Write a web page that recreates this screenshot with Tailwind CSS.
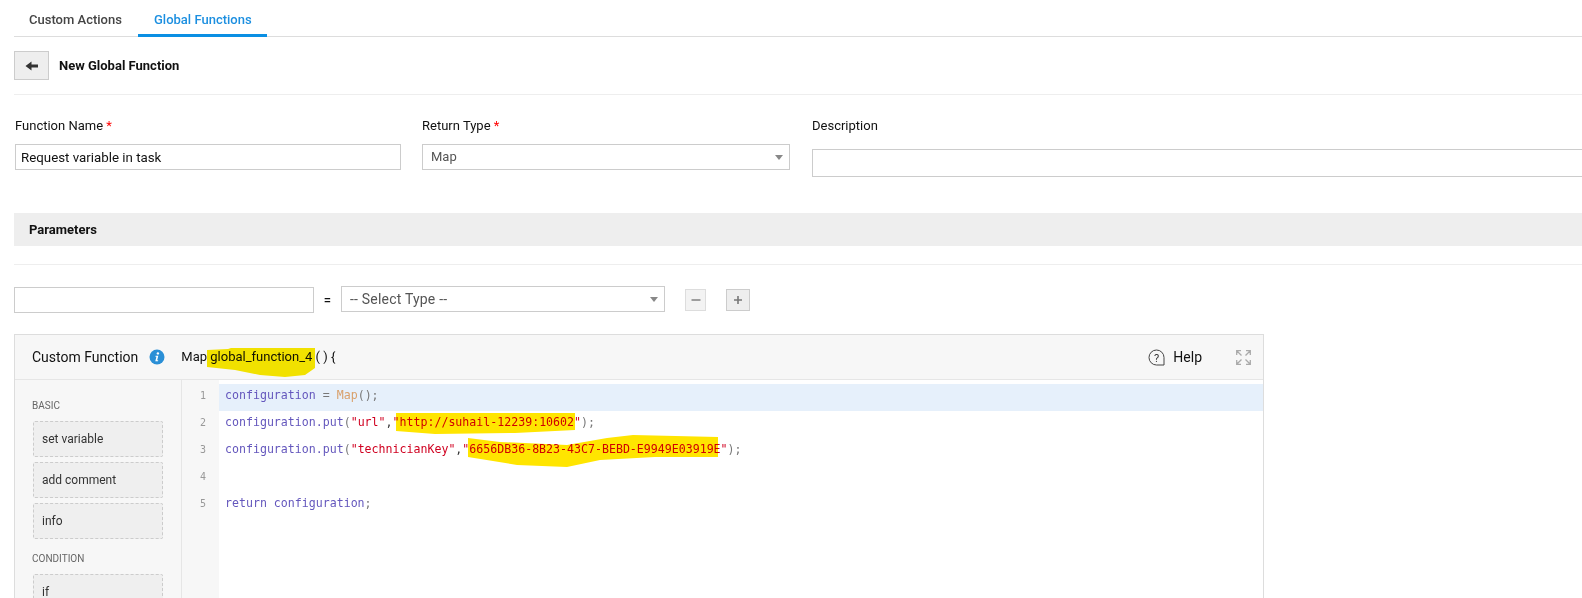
<!DOCTYPE html>
<html lang="en">
<head>
    <meta charset="UTF-8">
    <title>New Global Function</title>
    <script src="https://cdn.jsdelivr.net/npm/@tailwindcss/browser@4"></script>
</head>
<body class="bg-white h-[598px] overflow-hidden font-['Roboto',sans-serif] text-[13px] text-[#111]">
    <!-- Tabs -->
    <div class="ml-[14px] h-[37px] flex border-b border-[#ddd]">
        <div class="w-[124px] pl-[15px] pt-[10px] font-medium text-[#444]">Custom Actions</div>
        <div class="w-[129px] pl-[16px] pt-[10px] font-medium text-[#1c8fe0] border-b-[3px] border-[#0a8fe3] h-[37px]">Global Functions</div>
    </div>

    <!-- Title -->
    <div class="ml-[14px] h-[58px] flex items-center border-b border-[#eee]">
        <button class="w-[35px] h-[29px] bg-[#eee] border border-[#ccc] flex items-center justify-center">
            <svg width="14" height="12" viewBox="0 0 14 12"><path d="M0.5 6 L6.5 1.5 V4.5 H13 V7.5 H6.5 V10.5 Z" fill="#333"/></svg>
        </button>
        <span class="ml-[10px] font-bold text-[#111]">New Global Function</span>
    </div>

    <!-- Fields -->
    <div class="flex mt-[21px] h-[63px]">
        <div class="ml-[15px] w-[386px]">
            <div class="h-[28px] leading-[20px]">Function Name <span class="text-[#f00]">*</span></div>
            <input class="w-full h-[26px] border border-[#ccc] px-[5px] text-[13.3px] text-[#111] outline-none" value="Request variable in task">
        </div>
        <div class="ml-[21px] w-[368px]">
            <div class="h-[28px] leading-[20px]">Return Type <span class="text-[#f00]">*</span></div>
            <div class="h-[26px] border border-[#ccc] pl-[8px] pr-[6px] flex items-center justify-between text-[#555]">
                <span>Map</span>
                <svg width="8" height="5" viewBox="0 0 8 5"><path d="M0 0 H8 L4 5 Z" fill="#888"/></svg>
            </div>
        </div>
        <div class="ml-[22px] flex-1">
            <div class="h-[33px] leading-[20px]">Description</div>
            <div class="h-[28px] border border-r-0 border-[#ccc]"></div>
        </div>
    </div>

    <!-- Parameters -->
    <div class="ml-[14px] mt-[34px] h-[33px] bg-[#eee] pl-[15px] flex items-center font-bold text-[#111]">Parameters</div>
    <div class="ml-[14px] mt-[18px] border-t border-[#eee]"></div>

    <div class="ml-[14px] mt-[20px] h-[27px] flex items-center">
        <input class="w-[300px] h-[26px] mt-[2px] border border-[#ccc] outline-none">
        <span class="w-[27px] mt-[3px] text-center font-medium">=</span>
        <div class="w-[324px] h-[26px] border border-[#ccc] pl-[8px] pr-[6px] pt-px flex items-center justify-between text-[14px] tracking-[0.2px] text-[#555] [font-variant-ligatures:none]">
            <span>-- Select Type --</span>
            <svg width="8" height="5" viewBox="0 0 8 5"><path d="M0 0 H8 L4 5 Z" fill="#888"/></svg>
        </div>
        <button class="ml-[20px] w-[21px] h-[22px] mt-[3px] bg-[#f3f3f3] border border-[#ddd] flex items-center justify-center">
            <svg width="10" height="10" viewBox="0 0 10 10"><path d="M0.5 4.2 H9.5 V5.8 H0.5 Z" fill="#888"/></svg>
        </button>
        <button class="ml-[20px] w-[24px] h-[22px] mt-[3px] bg-[#eee] border border-[#ccc] flex items-center justify-center">
            <svg width="10" height="10" viewBox="0 0 10 10"><path d="M4.2 1 H5.8 V4.2 H9 V5.8 H5.8 V9 H4.2 V5.8 H1 V4.2 H4.2 Z" fill="#777"/></svg>
        </button>
    </div>

    <!-- Editor -->
    <div class="relative ml-[14px] mt-[22px] w-[1250px] h-[300px] border border-[#ddd]">
        <div class="h-[45px] bg-[#f7f7f7] border-b border-[#e6e6e6] flex items-center">
            <span class="ml-[17px] text-[14px] text-[#111]">Custom Function</span>
            <svg class="ml-[11px]" width="16" height="16" viewBox="0 0 16 16">
                <circle cx="8" cy="8" r="7.5" fill="#2a8fd6"/>
                <circle cx="8.9" cy="4.4" r="1.2" fill="#fff"/>
                <path d="M6.6 6.8 H9.3 L8.2 11.2 H9.2 L9 12.2 H6.3 L7.4 7.8 H6.4 Z" fill="#fff"/>
            </svg>
            <span class="ml-[16px] text-[13px] text-[#111]">Map global_function_4 ( ) {</span>
            <div class="ml-auto flex items-center">
                <svg width="17" height="17" viewBox="0 0 17 17" fill="none">
                    <path d="M16 16 H8.5 A7.5 7.5 0 1 1 16 8.5 Z" stroke="#444" stroke-width="1"/>
                    <text x="8.5" y="12.5" font-size="11" text-anchor="middle" fill="#333" font-family="Roboto">?</text>
                </svg>
                <span class="ml-[8px] text-[14px] text-[#111]">Help</span>
                <svg class="ml-[34px] mr-[12px]" width="15" height="15" viewBox="0 0 15 15" fill="none" stroke="#aaa" stroke-width="1.3">
                    <path d="M0.7 5 V0.7 H5 M0.7 0.7 L5.5 5.5"/>
                    <path d="M10 0.7 H14.3 V5 M14.3 0.7 L9.5 5.5"/>
                    <path d="M0.7 10 V14.3 H5 M0.7 14.3 L5.5 9.5"/>
                    <path d="M10 14.3 H14.3 V10 M14.3 14.3 L9.5 9.5"/>
                </svg>
            </div>
        </div>
        <div class="flex h-[254px]">
            <!-- Palette -->
            <div class="w-[167px] bg-[#f7f7f7] border-r border-[#e6e6e6] pl-[17px] pt-[18px] shrink-0">
                <div class="text-[10px] h-[23px] leading-[16px] text-[#666]">BASIC</div>
                <div class="w-[130px] h-[36px] ml-px bg-[#efefef] border border-dashed border-[#ccc] rounded-[2px] pl-[8px] flex items-center text-[12px] text-[#333]">set variable</div>
                <div class="w-[130px] h-[36px] ml-px mt-[5px] bg-[#efefef] border border-dashed border-[#ccc] rounded-[2px] pl-[8px] flex items-center text-[12px] text-[#333]">add comment</div>
                <div class="w-[130px] h-[36px] ml-px mt-[5px] bg-[#efefef] border border-dashed border-[#ccc] rounded-[2px] pl-[8px] flex items-center text-[12px] text-[#333]">info</div>
                <div class="text-[10px] h-[16px] leading-[16px] mt-[12px] text-[#666]">CONDITION</div>
                <div class="w-[130px] h-[36px] ml-px mt-[7px] bg-[#efefef] border border-dashed border-[#ccc] rounded-[2px] pl-[8px] flex items-center text-[12px] text-[#333]">if</div>
            </div>
            <!-- Gutter -->
            <div class="w-[37px] bg-[#f7f7f7] pt-[4px] shrink-0 font-['DejaVu_Sans_Mono',monospace] text-[10px] text-[#999] text-right">
                <div class="h-[27px] leading-[23px] pr-[13px]">1</div>
                <div class="h-[27px] leading-[23px] pr-[13px]">2</div>
                <div class="h-[27px] leading-[23px] pr-[13px]">3</div>
                <div class="h-[27px] leading-[23px] pr-[13px]">4</div>
                <div class="h-[27px] leading-[23px] pr-[13px]">5</div>
            </div>
            <!-- Code -->
            <div class="flex-1 pt-[4px] font-['DejaVu_Sans_Mono',monospace] text-[11.6px] text-[#6457bd]">
                <div class="h-[27px] leading-[23px] pl-[6px] bg-[#e6f0fb] whitespace-pre">configuration <span class="text-[#777]">=</span> <span class="text-[#d9a06b]">Map</span><span class="text-[#777]">();</span></div>
                <div class="h-[27px] leading-[23px] pl-[6px] whitespace-pre">configuration.put<span class="text-[#777]">(</span><span class="text-[#d00020]">"url"</span><span class="text-[#333]">,</span><span class="text-[#d00020]">"http://suhail-12239:10602"</span><span class="text-[#777]">);</span></div>
                <div class="h-[27px] leading-[23px] pl-[6px] whitespace-pre">configuration.put<span class="text-[#777]">(</span><span class="text-[#d00020]">"technicianKey"</span><span class="text-[#333]">,</span><span class="text-[#d00020]">"6656DB36-8B23-43C7-BEBD-E9949E03919E"</span><span class="text-[#777]">);</span></div>
                <div class="h-[27px]"></div>
                <div class="h-[27px] leading-[23px] pl-[6px] whitespace-pre">return configuration<span class="text-[#777]">;</span></div>
            </div>
        </div>

        <!-- Hand-drawn highlighter strokes, offsets are from the editor box -->
        <svg class="absolute left-0 top-0 mix-blend-multiply pointer-events-none" width="800" height="150" viewBox="0 0 800 150">
            <path d="M192 15 L213 14 L216 13 L300 13 L300 33 L290 40 L270 42 L245 40 L220 35 L192 32 Z" fill="#f9e900"/>
            <path d="M381 78 L470 78 L560 78 L560 95 L500 98 L420 99 L381 96 Z" fill="#ffe500"/>
            <path d="M453 103 L485 107 L552 110 L592 103 L618 100 L703 102 L703 122 L640 122 L585 125 L552 132 L502 130 L453 122 Z" fill="#ffe500"/>
        </svg>
    </div>
</body>
</html>
